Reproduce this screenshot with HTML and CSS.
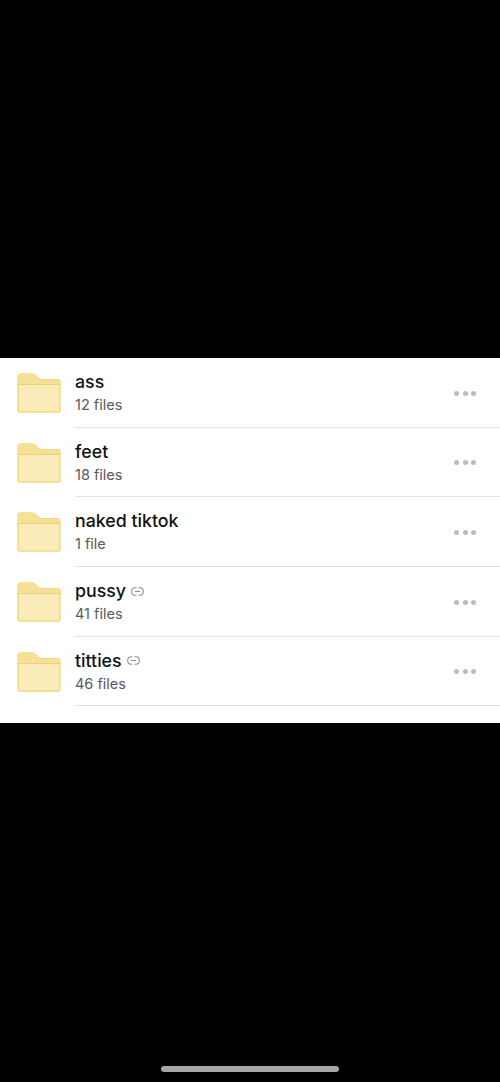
FILE: index.html
```html
<!DOCTYPE html>
<html lang="en">
<head>
  <meta charset="UTF-8">
  <meta name="viewport" content="width=device-width, initial-scale=1.0">
  <title>Folders</title>
  <link rel="stylesheet" href="styles.css">
</head>
<body>
  <svg class="defs" width="0" height="0">
    <symbol id="folder" viewBox="0 0 44 40">
      <path d="M1 36V4C1 2.200 2.200 1 4 1H14C16 1 17.500 1.600 19 3L21 5C22.300 6.200 23.300 6.700 25 6.700H40.500C42 6.700 43 7.700 43 9.200V37C43 38.300 42.300 39 41 39H3C1.700 39 1 38.300 1 37Z" fill="#f9ecb9" stroke="#f3d77f" stroke-width="1.500"/>
      <path d="M1 11.500H43V9.200C43 7.700 42 6.700 40.500 6.700H25C23.300 6.700 22.300 6.200 21 5L19 3C17.500 1.600 16 1 14 1H4C2.200 1 1 2.200 1 4Z" fill="#f6df97"/>
      <path d="M1 11.500H43" stroke="#f0cf6e" stroke-width="1.200" fill="none"/>
    </symbol>
    <symbol id="link" viewBox="0 0 13 9">
      <path d="M5.500 0.700H4.200C2.200 0.700 0.700 2.300 0.700 4.500C0.700 6.700 2.200 8.300 4.200 8.300H5.500M7.500 0.700H8.800C10.800 0.700 12.300 2.300 12.300 4.500C12.300 6.700 10.800 8.300 8.800 8.300H7.500" fill="none" stroke="#8f8f8f" stroke-width="1.100"/>
      <path d="M3.800 4.500H9.200" stroke="#8f8f8f" stroke-width="1.100"/>
    </symbol>
  </svg>

  <div class="top-space"></div>

  <div class="panel">
    <div class="row">
      <svg class="folder"><use href="#folder"/></svg>
      <div class="row-body">
        <div class="info">
          <div class="name">ass</div>
          <div class="count">12 files</div>
        </div>
        <div class="more"><span></span><span></span><span></span></div>
      </div>
    </div>
    <div class="row">
      <svg class="folder"><use href="#folder"/></svg>
      <div class="row-body">
        <div class="info">
          <div class="name">feet</div>
          <div class="count">18 files</div>
        </div>
        <div class="more"><span></span><span></span><span></span></div>
      </div>
    </div>
    <div class="row">
      <svg class="folder"><use href="#folder"/></svg>
      <div class="row-body">
        <div class="info">
          <div class="name">naked tiktok</div>
          <div class="count">1 file</div>
        </div>
        <div class="more"><span></span><span></span><span></span></div>
      </div>
    </div>
    <div class="row">
      <svg class="folder"><use href="#folder"/></svg>
      <div class="row-body">
        <div class="info">
          <div class="name">pussy<svg class="link"><use href="#link"/></svg></div>
          <div class="count">41 files</div>
        </div>
        <div class="more"><span></span><span></span><span></span></div>
      </div>
    </div>
    <div class="row">
      <svg class="folder"><use href="#folder"/></svg>
      <div class="row-body">
        <div class="info">
          <div class="name">titties<svg class="link"><use href="#link"/></svg></div>
          <div class="count">46 files</div>
        </div>
        <div class="more"><span></span><span></span><span></span></div>
      </div>
    </div>
  </div>

  <div class="bottom-space">
    <div class="home-bar"></div>
  </div>
</body>
</html>
```

FILE: styles.css
```css
html, body { height: 100%; }
body { margin: 0; background: #000; font-family: Inter, "Liberation Sans", sans-serif; display: flex; flex-direction: column; }
.defs { display: block; height: 0; }
.top-space { height: 358px; flex: none; }
.panel { height: 365px; flex: none; background: #fff; padding-left: 16.500px; box-sizing: border-box; }
.row { display: flex; height: 69.700px; }
.folder { width: 44px; height: 40px; flex: none; margin-top: 15px; }
.row-body { flex: 1; display: flex; justify-content: space-between; margin-left: 14.500px; border-bottom: 1px solid #e3e3e3; }
.name { font-size: 17.800px; font-weight: 500; line-height: 22px; margin-top: 13px; color: #111; display: flex; align-items: center; }
.count { font-size: 14.500px; line-height: 20px; margin-top: 2px; color: #5a5a5a; }
.link { width: 13px; height: 9px; margin-left: 5px; }
.more { display: flex; gap: 3.500px; margin: 32.500px 24px 0 0; }
.more span { width: 5px; height: 5px; border-radius: 50%; background: #bcbcbc; }
.bottom-space { flex: 1; display: flex; align-items: flex-end; justify-content: center; padding-bottom: 10px; }
.home-bar { width: 178px; height: 6px; border-radius: 3px; background: #a6a6a6; }
```
